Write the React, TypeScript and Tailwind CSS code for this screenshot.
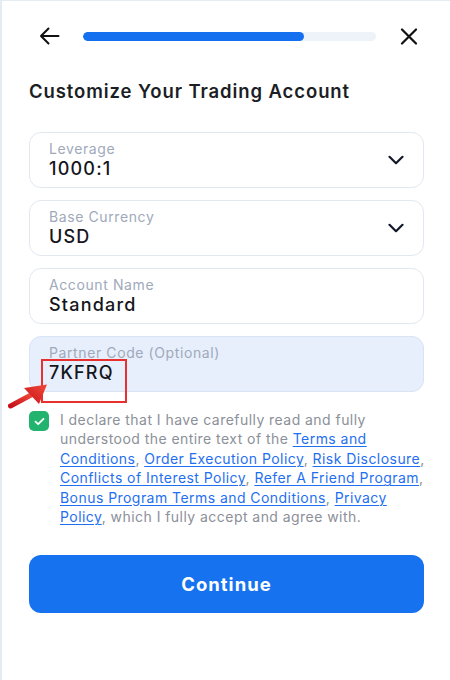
import React from 'react';

const font = { fontFamily: 'Inter, "Noto Sans", sans-serif' };

const Chevron = () => (
  <svg width="16" height="10" viewBox="0 0 16 10" fill="none" className="shrink-0">
    <path d="M1.5 1.8 8 8.2l6.5-6.4" stroke="#111827" strokeWidth="2.2" strokeLinecap="round" strokeLinejoin="round" />
  </svg>
);

interface FieldProps {
  label: string;
  value: string;
  select?: boolean;
  filled?: boolean;
  children?: React.ReactNode;
}

const Field = ({ label, value, select, filled, children }: FieldProps) => (
  <div
    className={
      'relative h-[56px] rounded-[12px] border pl-[19px] pr-[19px] flex items-center ' +
      (filled ? 'bg-[#e7effc] border-[#d8e3f4]' : 'bg-white border-[#e3e8f0]')
    }
  >
    <div className="flex-1 min-w-0 flex flex-col">
      <span className="text-[14px] leading-[17px] tracking-[0.6px] text-[#a0a9bb]">{label}</span>
      <span className="text-[18px] leading-[24px] font-medium tracking-[1.2px] text-[#14161b]">{value}</span>
    </div>
    {select && <Chevron />}
    {children}
  </div>
);

const A = ({ children }: { children: React.ReactNode }) => (
  <a className="text-[#1f6ff0] underline underline-offset-2 decoration-1">{children}</a>
);

export default function App() {
  return (
    <div
      style={font}
      className="min-h-[680px] w-full bg-white border-l-2 border-t border-[#e5ebf3] pl-[27px] pr-[26px] pt-[26px]"
    >
      {/* top bar */}
      <div className="flex items-center h-[18px]">
        <svg width="21" height="18" viewBox="0 0 21 18" fill="none" className="ml-[10px]">
          <path d="M19.5 9H2M9.5 1.5 2 9l7.5 7.5" stroke="#111" strokeWidth="2" strokeLinecap="round" strokeLinejoin="round" />
        </svg>
        <div className="ml-[23px] w-[293px] h-[9px] rounded-full bg-[#eef3f9] overflow-hidden">
          <div className="h-full w-[221px] rounded-full bg-[#1570ef]" />
        </div>
        <svg width="18" height="17" viewBox="0 0 18 17" fill="none" className="ml-[24px]">
          <path d="M2 1.5 16 15.5M16 1.5 2 15.5" stroke="#111" strokeWidth="2.2" strokeLinecap="round" />
        </svg>
      </div>

      <h1 className="mt-[34px] text-[18.5px] leading-[24px] font-semibold text-[#1b1e25] tracking-[0.9px]">
        Customize Your Trading Account
      </h1>

      <div className="mt-[29px] flex flex-col gap-[12px]">
        <Field label="Leverage" value="1000:1" select />
        <Field label="Base Currency" value="USD" select />
        <Field label="Account Name" value="Standard" />
        <Field label="Partner Code (Optional)" value="7KFRQ" filled>
          <div className="absolute left-[11px] top-[22px] w-[86px] h-[44px] border-2 border-[#e8302e]" />
          <svg width="42" height="28" viewBox="0 0 42 28" className="absolute left-[-22px] top-[46px]">
            <defs>
              <linearGradient id="ar" x1="0" y1="1" x2="1" y2="0">
                <stop offset="0" stopColor="#c8101a" />
                <stop offset="1" stopColor="#f04a3a" />
              </linearGradient>
            </defs>
            <path d="M2.5 23 L24 11.5" stroke="url(#ar)" strokeWidth="5" strokeLinecap="round" />
            <path d="M16 5 L39 1.5 L31 21 Z" fill="url(#ar)" />
          </svg>
        </Field>
      </div>

      <div className="mt-[18px] flex items-start gap-[11px]">
        <div className="mt-[1px] w-[20px] h-[20px] shrink-0 rounded-[5px] bg-[#22b46e] flex items-center justify-center">
          <svg width="11" height="9" viewBox="0 0 11 9" fill="none">
            <path d="M1.5 4.6 4.2 7.2 9.5 1.8" stroke="#fff" strokeWidth="1.8" strokeLinecap="round" strokeLinejoin="round" />
          </svg>
        </div>
        <p className="w-[366px] shrink-0 whitespace-nowrap text-[14px] leading-[19.4px] tracking-[0.45px] text-[#8b9099]">
          I declare that I have carefully read and fully
          <br />
          understood the entire text of the <A>Terms and</A>
          <br />
          <A>Conditions</A>, <A>Order Execution Policy</A>, <A>Risk Disclosure</A>,
          <br />
          <A>Conflicts of Interest Policy</A>, <A>Refer A Friend Program</A>,
          <br />
          <A>Bonus Program Terms and Conditions</A>, <A>Privacy</A>
          <br />
          <A>Policy</A>, which I fully accept and agree with.
        </p>
      </div>

      <button className="mt-[29px] w-full h-[58px] rounded-[12px] bg-[#1672ef] text-white text-[18.5px] font-bold tracking-[1px]">
        Continue
      </button>
    </div>
  );
}
